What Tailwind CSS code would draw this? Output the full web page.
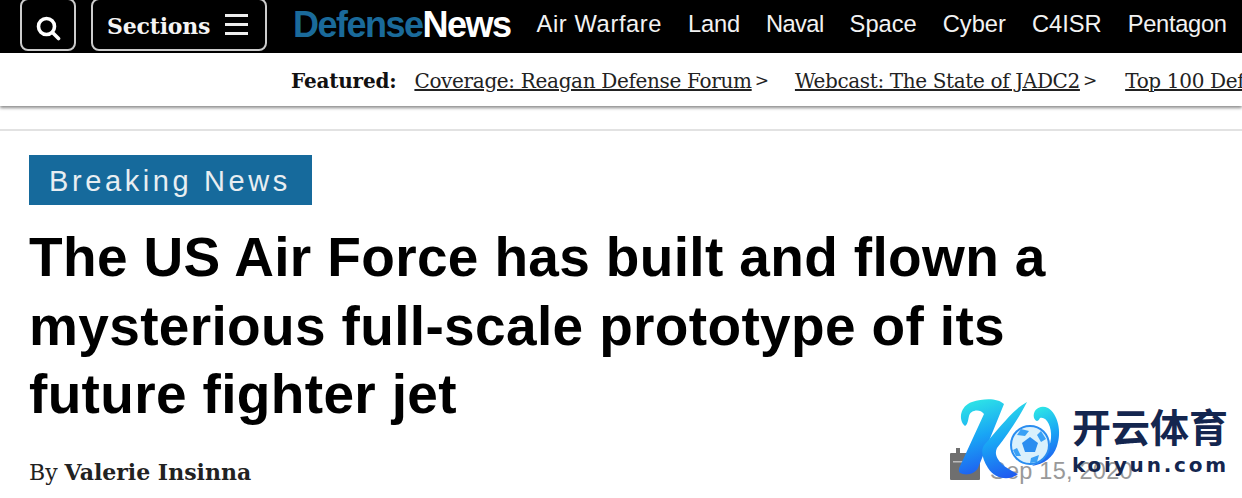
<!DOCTYPE html>
<html lang="en">
<head>
  <meta charset="UTF-8" />
  <title>Defense News</title>
  <script src="https://cdn.jsdelivr.net/npm/@tailwindcss/browser@4"></script>
</head>
<body class="bg-white w-[1242px] h-[498px] overflow-hidden relative font-['Liberation_Sans',sans-serif]">
  <!-- Top nav -->
  <div class="bg-black h-[53px] flex items-center whitespace-nowrap overflow-hidden">
    <div class="ml-[20px] -mt-[4px] w-[56px] h-[53px] border-2 border-[#ccc] rounded-[8px] flex items-center justify-center shrink-0">
      <svg width="26" height="26" viewBox="0 0 26 26" fill="none" stroke="white" stroke-width="3.6" class="mt-[6px]"><circle cx="11.5" cy="11.5" r="8"/><path d="M17.5 17.5 L23.5 23.5" stroke-linecap="round"/></svg>
    </div>
    <div class="ml-[15px] -mt-[4px] w-[176px] h-[53px] border-2 border-[#ccc] rounded-[8px] flex items-center shrink-0 pl-[14px] pt-[4px]">
      <span class="font-['DejaVu_Serif',serif] font-bold text-[22px] tracking-[-0.2px] text-[#f4f4f4]">Sections</span>
      <svg width="23" height="21" viewBox="0 0 23 21" fill="#eee" class="ml-[15px] -mt-[4px]"><rect y="0" width="23" height="3"/><rect y="9" width="23" height="3"/><rect y="18" width="23" height="3"/></svg>
    </div>
    <div class="ml-[26px] -mt-[3px] text-[36px] font-bold tracking-[-1.5px] leading-none shrink-0"><span class="text-[#1a6a9a]">Defense</span><span class="text-white">News</span></div>
    <nav class="ml-[26px] -mt-[4px] flex gap-[26px] text-[23.7px] text-[#f2f2f2] shrink-0">
      <span class="tracking-[0.6px]">Air Warfare</span><span class="tracking-[-0.2px]">Land</span><span class="tracking-[-0.6px]">Naval</span><span>Space</span><span>Cyber</span><span>C4ISR</span><span class="tracking-[-0.3px]">Pentagon</span>
    </nav>
  </div>

  <!-- Featured bar -->
  <div class="h-[53px] bg-white shadow-[0_2px_3px_rgba(0,0,0,0.45)] flex items-center pl-[291px] pt-[3px] whitespace-nowrap overflow-hidden font-['DejaVu_Serif',serif] text-[20px] text-[#222] relative">
    <span class="font-bold text-[#111] tracking-[-0.2px] mr-[18px]">Featured:</span>
    <a class="underline tracking-[-0.33px] shrink-0">Coverage: Reagan Defense Forum</a><span class="ml-[3px] mr-[26px] text-[17px]">&gt;</span>
    <a class="underline tracking-[-0.36px] shrink-0">Webcast: The State of JADC2</a><span class="ml-[3px] mr-[28px] text-[17px]">&gt;</span>
    <a class="underline tracking-[-0.33px] shrink-0">Top 100 Defense Companies</a>
  </div>

  <!-- Article -->
  <div class="mt-[23px] h-[2px] bg-[#e2e2e2]"></div>
  <div class="px-[29px] pt-[24px]">
    <div class="w-[283px] h-[50px] bg-[#166a9c] text-[#e8eef2] text-[29px] tracking-[3.6px] flex items-center pl-[20px] pt-[3px]">Breaking News</div>
    <h1 class="mt-[18px] text-[55px] leading-[68.5px] font-bold text-black tracking-[0.35px]">The US Air Force has built and flown a<br>mysterious full-scale prototype of its<br>future fighter jet</h1>
    <div class="mt-[27px] font-['DejaVu_Serif',serif] text-[22px] text-[#222]">By <span class="font-bold">Valerie Insinna</span></div>
  </div>

  <!-- Date, under the watermark -->
  <div class="absolute left-[950px] top-[448px] flex items-start gap-[10px] text-[#999]">
    <svg width="30" height="33" viewBox="0 0 30 33" fill="#6f6f6f"><rect x="6" y="0" width="4" height="8"/><rect x="20" y="0" width="4" height="8"/><rect x="0" y="5" width="30" height="27" rx="1"/><rect x="3" y="13" width="24" height="1.5" fill="#bbb"/></svg>
    <span class="text-[23.5px] leading-[28px] mt-[9px] tracking-[0.25px]">Sep 15, 2020</span>
  </div>

  <!-- Watermark logo -->
  <div class="absolute left-[958px] top-[398px] w-[284px] h-[90px]">
    <svg class="absolute left-0 top-0" width="110" height="86" viewBox="0 0 110 86" fill="none">
      <defs>
        <linearGradient id="kg" x1="0.3" y1="0" x2="0.5" y2="1"><stop offset="0" stop-color="#2ee6e6"/><stop offset="0.5" stop-color="#19a5f5"/><stop offset="1" stop-color="#1f5cf0"/></linearGradient>
      </defs>
      <path d="M7 28 C0 22 2 8 14 4 C26 0 40 0 46 6 L20 70 C17 76 8 78 2 75 C0 72 1 70 3 66 L26 16 C22 10 12 12 11 18 C10 22 10 26 7 28 Z" fill="url(#kg)"/>
      <path d="M69 4 C62 18 50 36 39 50 C36 56 38 66 60 76 C50 84 36 80 30 70 C24 60 22 52 27 46 C40 32 54 12 69 4 Z" fill="url(#kg)"/>
      <path d="M76 20 C74 12 82 6 90 10 C100 16 104 34 99 48 C95 60 86 66 74 68 C84 62 92 52 93 40 C94 28 88 18 82 20 C80 24 78 24 76 20 Z" fill="url(#kg)"/>
      <circle cx="72" cy="47" r="19" fill="#d9f0fc" stroke="#2a8df0" stroke-width="2"/>
      <path d="M72 39 L80 45 L77 54 L67 54 L64 45 Z" fill="#2a8df0"/>
      <path d="M63 31 L71 33 L67 38 L59 37 Z M83 33 L88 41 L83 44 L79 37 Z M59 50 L63 58 L58 58 L55 52 Z M73 60 L81 57 L79 64 L72 65 Z" fill="#3aa0f5"/>
    </svg>
    <div class="absolute left-[114px] top-[8px] text-[39px] leading-none font-bold text-[#14264f] font-['Noto_Sans_CJK_SC',sans-serif]">开云体育</div>
    <div class="absolute left-[114px] top-[57px] text-[20px] leading-none font-bold text-[#14264f] tracking-[2.8px] font-['DejaVu_Sans',sans-serif]">koiyun.com</div>
  </div>
</body>
</html>
